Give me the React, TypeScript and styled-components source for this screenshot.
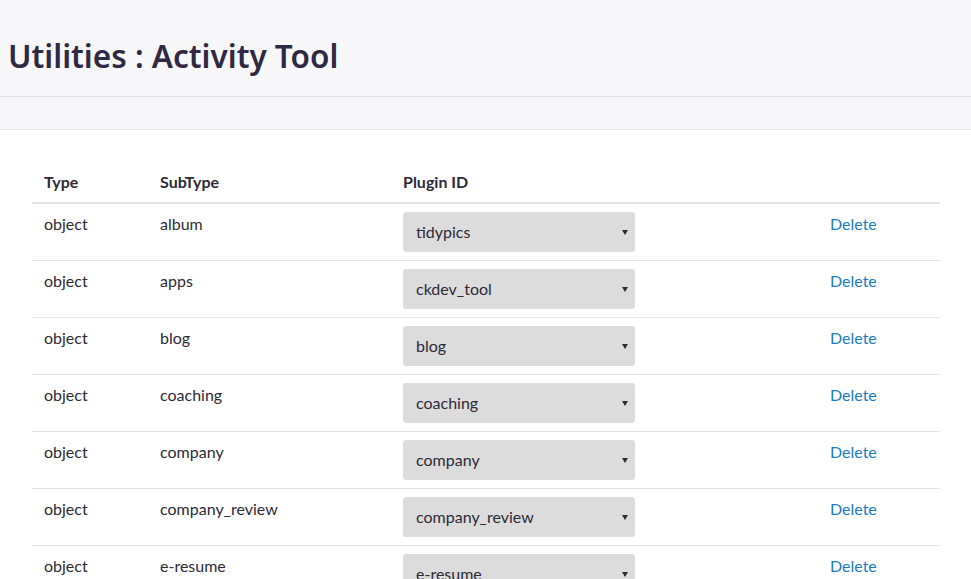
import React from 'react';
import styled, { createGlobalStyle } from 'styled-components';

interface Row {
  type: string;
  subtype: string;
  plugin: string;
}

const rows: Row[] = [
  { type: 'object', subtype: 'album', plugin: 'tidypics' },
  { type: 'object', subtype: 'apps', plugin: 'ckdev_tool' },
  { type: 'object', subtype: 'blog', plugin: 'blog' },
  { type: 'object', subtype: 'coaching', plugin: 'coaching' },
  { type: 'object', subtype: 'company', plugin: 'company' },
  { type: 'object', subtype: 'company_review', plugin: 'company_review' },
  { type: 'object', subtype: 'e-resume', plugin: 'e-resume' },
  { type: 'object', subtype: 'event', plugin: 'event_calendar' },
];

function App() {
  return (
    <>
      <GlobalStyle />
      <Header>
        <Title>Utilities : Activity Tool</Title>
      </Header>
      <SubBar />
      <Main>
        <Table>
          <colgroup>
            <col style={{ width: 116 }} />
            <col style={{ width: 243 }} />
            <col style={{ width: 427 }} />
            <col />
          </colgroup>
          <thead>
            <tr>
              <Th>Type</Th>
              <Th>SubType</Th>
              <Th>Plugin ID</Th>
              <Th></Th>
            </tr>
          </thead>
          <tbody>
            {rows.map(function (row) {
              return (
                <tr key={row.subtype}>
                  <Td>{row.type}</Td>
                  <Td>{row.subtype}</Td>
                  <Td>
                    <SelectWrap>
                      <Select defaultValue={row.plugin}>
                        <option value={row.plugin}>{row.plugin}</option>
                      </Select>
                    </SelectWrap>
                  </Td>
                  <Td>
                    <DeleteLink href="#">Delete</DeleteLink>
                  </Td>
                </tr>
              );
            })}
          </tbody>
        </Table>
      </Main>
    </>
  );
}

export default App;

const GlobalStyle = createGlobalStyle({
  body: {
    margin: 0,
    background: '#FFFFFF',
    fontFamily: 'Lato, "Open Sans", sans-serif',
    color: '#2E2A36',
  },
});

const Header = styled.header({
  height: 96,
  background: '#F7F7F9',
  borderBottom: '1px solid #E3E3E6',
  display: 'flex',
  alignItems: 'center',
  padding: '0 8px',
});

const Title = styled.h1({
  margin: 0,
  fontFamily: '"Noto Sans", sans-serif',
  fontSize: 31.5,
  fontWeight: 600,
  color: '#2F2944',
  marginTop: 15,
});

const SubBar = styled.div({
  height: 32,
  background: '#F7F7F9',
  borderBottom: '1px solid #E3E3E6',
});

const Main = styled.main({
  padding: '32px 31px 32px 32px',
});

const Table = styled.table({
  width: '100%',
  tableLayout: 'fixed',
  borderCollapse: 'collapse',
  fontSize: 16,
  lineHeight: '24px',
});

const Th = styled.th({
  textAlign: 'left',
  fontWeight: 700,
  padding: '8px 12px',
  borderBottom: '2px solid #E3E3E6',
  color: '#2E2A36',
});

const Td = styled.td({
  padding: '8px 12px',
  verticalAlign: 'top',
  borderBottom: '1px solid #E3E3E6',
  height: 40,
});

const SelectWrap = styled.div({
  position: 'relative',
  width: 232,
  '&::after': {
    content: '""',
    position: 'absolute',
    right: 7,
    top: 18,
    borderLeft: '3px solid transparent',
    borderRight: '3px solid transparent',
    borderTop: '5px solid #2E2A36',
    pointerEvents: 'none',
  },
});

const Select = styled.select({
  appearance: 'none',
  width: '100%',
  height: 40,
  border: 'none',
  borderRadius: 3,
  background: '#DCDCDC',
  padding: '0 13px 2px',
  fontFamily: 'inherit',
  fontSize: 16,
  color: '#2E2A36',
});

const DeleteLink = styled.a({
  color: '#1A7BC0',
  textDecoration: 'none',
});
